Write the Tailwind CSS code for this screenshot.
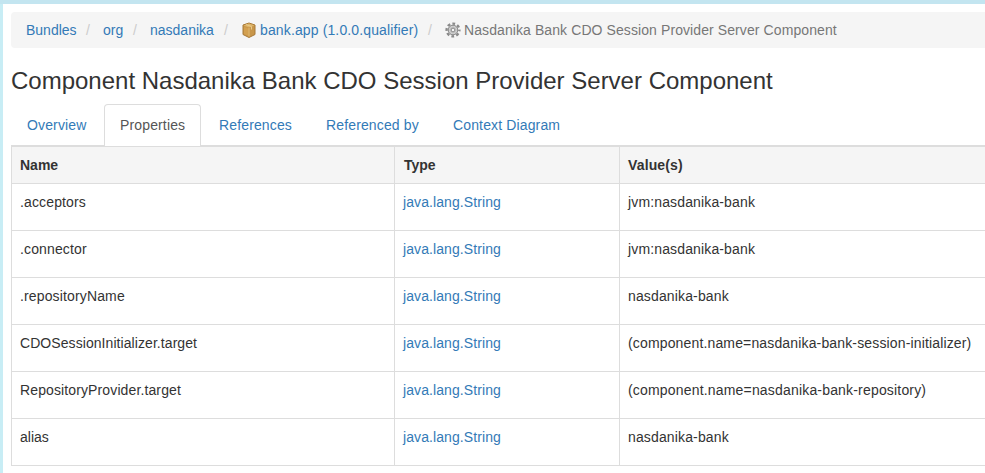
<!DOCTYPE html>
<html lang="en">
<head>
<meta charset="utf-8">
<title>Nasdanika Bank CDO Session Provider Server Component</title>
<script src="https://cdn.jsdelivr.net/npm/@tailwindcss/browser@4"></script>
</head>
<body class="h-[473px] w-[985px] overflow-hidden border-t-4 border-[#c3e5f0] bg-white font-['Liberation_Sans',Arial,sans-serif] text-[14px] leading-5 text-[#333]">
<div class="h-[469px] border-l-[3px] border-[#c8edf5] pl-2 pt-2">
  <nav class="flex h-9 items-center whitespace-nowrap rounded-l bg-[#f5f5f5] pl-[15px] text-[#337ab7]">
    <a class="w-[51px]">Bundles</a><span class="w-[26px] pl-[9px] text-[#ccc]">/</span>
    <a class="w-[21px]">org</a><span class="w-[26px] pl-[9px] text-[#ccc]">/</span>
    <a class="w-[65px]">nasdanika</a><span class="w-[26px] pl-[9px] text-[#ccc]">/</span>
    <svg class="mr-[3px] h-4 w-4 shrink-0" viewBox="0 0 16 16">
      <path d="M8 1l6 2v9.500L8 15.500l-6-3V3z" fill="#c8964a" stroke="#a87a38"/>
      <path d="M2.500 3.500L8 5.500l5.500-2L8 1.500z" fill="#ddb468"/>
      <path d="M3 5l4.500 1.500v7.500L3 12z" fill="#d3a050"/>
      <path d="M8 6v8.500" stroke="#e2bc76"/>
      <path d="M5 2.500l5.500 2v3" fill="none" stroke="#e8ca8c"/>
    </svg>
    <a class="w-[159px] tracking-[0.13px]">bank.app (1.0.0.qualifier)</a><span class="w-[26px] pl-[9px] text-[#ccc]">/</span>
    <svg class="mr-[3px] h-4 w-4 shrink-0" viewBox="0 0 16 16">
      <circle cx="8" cy="8" r="6.400" fill="none" stroke="#8a8a8a" stroke-width="2.400" stroke-dasharray="2.800 2.226" stroke-dashoffset="1.400"/>
      <circle cx="8" cy="8" r="4.800" fill="#d0d0d0" stroke="#858585"/>
      <circle cx="8" cy="8" r="3" fill="none" stroke="#c4c4c4"/>
      <circle cx="8" cy="8" r="1.900" fill="#f5f5f5" stroke="#858585"/>
    </svg>
    <span class="tracking-[0.09px] text-[#777]">Nasdanika Bank CDO Session Provider Server Component</span>
  </nav>
  <h1 class="mt-5 h-[36px] whitespace-nowrap text-[24px] leading-[26px]">Component Nasdanika Bank CDO Session Provider Server Component</h1>
  <div class="flex h-[41px] whitespace-nowrap tracking-[0.14px] text-[#337ab7]">
    <a class="w-[93px] pl-4 pt-[11px]">Overview</a>
    <a class="relative z-10 h-[42px] w-[97px] rounded-t border border-b-0 border-[#ddd] bg-white pl-[15px] pt-[10px] text-[#555]">Properties</a>
    <a class="w-[107px] pl-[18px] pt-[11px]">References</a>
    <a class="w-[127px] pl-[18px] pt-[11px]">Referenced by</a>
    <a class="pl-[18px] pt-[11px]">Context Diagram</a>
  </div>
  <div class="border-l border-t-2 border-[#ddd]">
    <div class="grid h-[37px] grid-cols-[383px_225px_1fr] border-b border-[#ddd] bg-[#f5f5f5] font-bold">
      <div class="border-r border-[#ddd] pl-2 pt-2">Name</div><div class="border-r border-[#ddd] pl-[9px] pt-2">Type</div><div class="pl-2 pt-2 tracking-[0.14px]">Value(s)</div>
    </div>
    <div class="grid h-[47px] grid-cols-[383px_225px_1fr] whitespace-nowrap border-b border-[#ddd]">
      <div class="border-r border-[#ddd] pl-2 pt-2 tracking-[0.14px]">.acceptors</div><div class="border-r border-[#ddd] pl-2 pt-2 tracking-[0.09px] text-[#337ab7]">java.lang.String</div><div class="pl-2 pt-2 tracking-[0.14px]">jvm:nasdanika-bank</div>
    </div>
    <div class="grid h-[47px] grid-cols-[383px_225px_1fr] whitespace-nowrap border-b border-[#ddd]">
      <div class="border-r border-[#ddd] pl-2 pt-2 tracking-[0.14px]">.connector</div><div class="border-r border-[#ddd] pl-2 pt-2 tracking-[0.09px] text-[#337ab7]">java.lang.String</div><div class="pl-2 pt-2 tracking-[0.14px]">jvm:nasdanika-bank</div>
    </div>
    <div class="grid h-[47px] grid-cols-[383px_225px_1fr] whitespace-nowrap border-b border-[#ddd]">
      <div class="border-r border-[#ddd] pl-2 pt-2 tracking-[0.14px]">.repositoryName</div><div class="border-r border-[#ddd] pl-2 pt-2 tracking-[0.09px] text-[#337ab7]">java.lang.String</div><div class="pl-2 pt-2 tracking-[0.14px]">nasdanika-bank</div>
    </div>
    <div class="grid h-[47px] grid-cols-[383px_225px_1fr] whitespace-nowrap border-b border-[#ddd]">
      <div class="border-r border-[#ddd] pl-2 pt-2 tracking-[0.07px]">CDOSessionInitializer.target</div><div class="border-r border-[#ddd] pl-2 pt-2 tracking-[0.09px] text-[#337ab7]">java.lang.String</div><div class="pl-2 pt-2 tracking-[0.15px]">(component.name=nasdanika-bank-session-initializer)</div>
    </div>
    <div class="grid h-[47px] grid-cols-[383px_225px_1fr] whitespace-nowrap border-b border-[#ddd]">
      <div class="border-r border-[#ddd] pl-2 pt-2 tracking-[0.12px]">RepositoryProvider.target</div><div class="border-r border-[#ddd] pl-2 pt-2 tracking-[0.09px] text-[#337ab7]">java.lang.String</div><div class="pl-2 pt-2 tracking-[0.18px]">(component.name=nasdanika-bank-repository)</div>
    </div>
    <div class="grid h-[47px] grid-cols-[383px_225px_1fr] whitespace-nowrap border-b border-[#ddd]">
      <div class="border-r border-[#ddd] pl-2 pt-2">alias</div><div class="border-r border-[#ddd] pl-2 pt-2 tracking-[0.09px] text-[#337ab7]">java.lang.String</div><div class="pl-2 pt-2 tracking-[0.14px]">nasdanika-bank</div>
    </div>
  </div>
</div>
</body>
</html>
